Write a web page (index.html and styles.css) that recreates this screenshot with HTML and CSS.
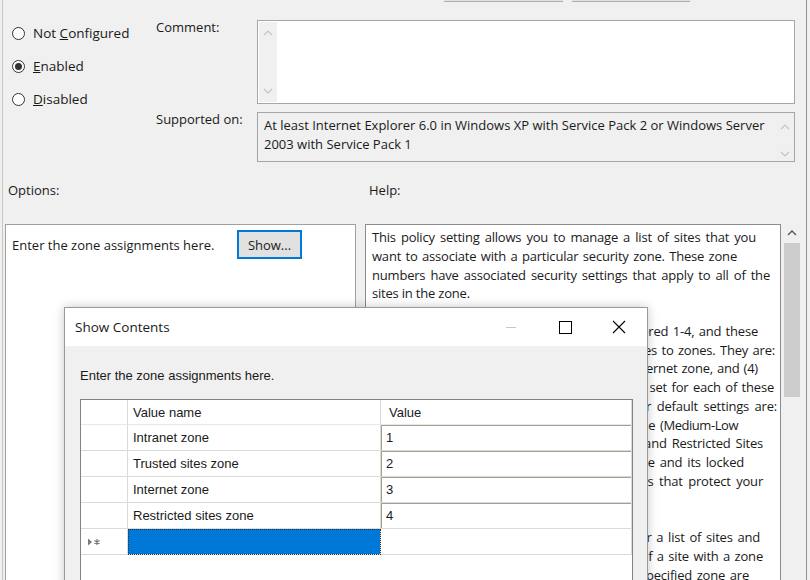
FILE: index.html
```html
<!DOCTYPE html>
<html>
<head>
<meta charset="utf-8">
<link rel="stylesheet" href="styles.css">
</head>
<body>
<div class="window">
  <div class="topbtns"><div class="tbtn w1"></div><div class="tbtn w2"></div></div>

  <div class="config">
    <div class="radios">
      <div class="radio"><span class="circle"></span><span>Not <u>C</u>onfigured</span></div>
      <div class="radio"><span class="circle on"></span><span><u>E</u>nabled</span></div>
      <div class="radio"><span class="circle"></span><span><u>D</u>isabled</span></div>
    </div>
    <div class="lbl lbl-comment">Comment:</div>
    <div class="box comment">
      <div class="vscroll">
        <svg width="10" height="6" viewBox="0 0 10 6"><polyline points="1,5 5,1 9,5" fill="none" stroke="#c4c4c4" stroke-width="1.2"/></svg>
        <svg width="10" height="6" viewBox="0 0 10 6"><polyline points="1,1 5,5 9,1" fill="none" stroke="#c4c4c4" stroke-width="1.2"/></svg>
      </div>
    </div>
    <div class="lbl lbl-supported">Supported on:</div>
    <div class="box supported">
      <div class="sup-text">At least Internet Explorer 6.0 in Windows XP with Service Pack 2 or Windows Server<br>2003 with Service Pack 1</div>
      <div class="vscroll plain">
        <svg width="10" height="6" viewBox="0 0 10 6"><polyline points="1,5 5,1 9,5" fill="none" stroke="#c4c4c4" stroke-width="1.2"/></svg>
        <svg width="10" height="6" viewBox="0 0 10 6"><polyline points="1,1 5,5 9,1" fill="none" stroke="#c4c4c4" stroke-width="1.2"/></svg>
      </div>
    </div>
  </div>

  <div class="sections">
    <div class="sec-opt">Options:</div>
    <div class="sec-help">Help:</div>
  </div>

  <div class="panels">
    <div class="options">
      <div class="opt-row">
        <span class="opt-label">Enter the zone assignments here.</span>
        <span class="show-btn">Show...</span>
      </div>
    </div>
    <div class="help">
      <span class="ln l1">This policy setting allows you to manage a list of sites that you</span>
      <span class="ln l2">want to associate with a particular security zone. These zone</span>
      <span class="ln l3">numbers have associated security settings that apply to all of the</span>
      <span class="ln end">sites in the zone.</span>
      <span class="ln blank"></span>
      <span class="ln l6">Internet Explorer has 4 security zones, numbered 1-4, and these</span>
      <span class="ln l7">are used by this policy setting to associate sites to zones. They are:</span>
      <span class="ln l8">(1) Intranet zone, (2) Trusted Sites zone, (3) Internet zone, and (4)</span>
      <span class="ln l9">Restricted Sites zone. Security settings can be set for each of these</span>
      <span class="ln l10">zones through other policy settings, and their default settings are:</span>
      <span class="ln l11">Trusted Sites zone (Low template), Intranet zone (Medium-Low</span>
      <span class="ln l12">template), Internet zone (Medium template), and Restricted Sites</span>
      <span class="ln l13">zone (High template). (The Local Machine zone and its locked</span>
      <span class="ln l14">down equivalent have special security settings that protect your</span>
      <span class="ln end">local computer.)</span>
      <span class="ln blank"></span>
      <span class="ln l17">If you enable this policy setting, you can enter a list of sites and</span>
      <span class="ln l18">their related zone numbers. The association of a site with a zone</span>
      <span class="ln l19">will ensure that the security settings for the specified zone are</span>
      <span class="ln end">applied to the site.</span>
    </div>
    <div class="help-scroll">
      <div class="arrow"><svg width="10" height="6" viewBox="0 0 10 6"><polyline points="1,5 5,1 9,5" fill="none" stroke="#555" stroke-width="1.3"/></svg></div>
      <div class="thumb"></div>
    </div>
  </div>

  <div class="dialog">
    <div class="titlebar">
      <span class="title">Show Contents</span>
      <div class="controls">
        <span class="ctl"><svg width="12" height="12" viewBox="0 0 12 12"><line x1="1" y1="6.5" x2="11" y2="6.5" stroke="#c6c6c6" stroke-width="1"/></svg></span>
        <span class="ctl"><svg width="13" height="13" viewBox="0 0 13 13"><rect x="0.5" y="0.5" width="12" height="12" fill="none" stroke="#000" stroke-width="1"/></svg></span>
        <span class="ctl"><svg width="14" height="14" viewBox="0 0 14 14"><path d="M1 1 L13 13 M13 1 L1 13" stroke="#000" stroke-width="1.1" fill="none"/></svg></span>
      </div>
    </div>
    <div class="dbody">
      <div class="dlabel">Enter the zone assignments here.</div>
      <div class="grid">
        <div class="c rh hdr"></div>
        <div class="c hdr">Value name</div>
        <div class="c hdr hv">Value</div>

        <div class="c rh"></div>
        <div class="c">Intranet zone</div>
        <div class="c val">1</div>

        <div class="c rh"></div>
        <div class="c">Trusted sites zone</div>
        <div class="c val">2</div>

        <div class="c rh"></div>
        <div class="c">Internet zone</div>
        <div class="c val">3</div>

        <div class="c rh"></div>
        <div class="c">Restricted sites zone</div>
        <div class="c val">4</div>

        <div class="c rh newrow"><svg width="14" height="8" viewBox="0 0 14 8"><polygon points="0,0.5 4,4 0,7.5" fill="#7a7a7a"/><path d="M9 1 V7 M6.4 2.5 L11.6 5.5 M11.6 2.5 L6.4 5.5" stroke="#7a7a7a" stroke-width="1.2"/></svg></div>
        <div class="c sel"></div>
        <div class="c val blank"></div>
      </div>
    </div>
  </div>
</div>
</body>
</html>
```

FILE: styles.css
```css
html, body {
  margin: 0;
  padding: 0;
}
body {
  background: #f0f0f0;
  font-family: "Open Sans", "Noto Sans", sans-serif;
  font-size: 13px;
  color: #1a1a1a;
  overflow: hidden;
  width: 810px;
  height: 580px;
}
.window {
  position: relative;
  margin-left: 2px;
  width: 803px;
  height: 580px;
  border-left: 1px solid #c6c6c6;
  border-right: 1px solid #8f8f8f;
  overflow: hidden;
}
.topbtns {
  display: flex;
  gap: 9px;
  margin-left: 441px;
  height: 2px;
}
.tbtn {
  height: 1px;
  background: #e1e1e1;
  border-bottom: 1px solid #adadad;
}
.w1 { width: 119px; }
.w2 { width: 118px; }

.config {
  display: grid;
  grid-template-columns: 144px 101px 538px;
  grid-template-rows: 84px 50px;
  row-gap: 8px;
  margin-top: 18px;
  margin-left: 9px;
}
.radios {
  grid-row: 1 / span 2;
  grid-column: 1;
  display: flex;
  flex-direction: column;
  gap: 15px;
  padding-top: 4px;
  font-size: 13.5px;
}
.radio {
  display: flex;
  align-items: center;
  gap: 8px;
  height: 18px;
  line-height: 18px;
}
.circle {
  width: 13px;
  height: 13px;
  box-sizing: border-box;
  border: 1px solid #333;
  border-radius: 50%;
  background: #fff;
  display: flex;
  align-items: center;
  justify-content: center;
}
.circle.on::after {
  content: "";
  width: 7px;
  height: 7px;
  border-radius: 50%;
  background: #333;
}
.lbl {
  line-height: 18px;
  margin-top: -2px;
  grid-column: 2;
}
.lbl-comment { grid-row: 1; }
.lbl-supported { grid-row: 2; }
.box {
  grid-column: 3;
  box-sizing: border-box;
  border: 1px solid #a6a6a6;
  display: flex;
  justify-content: space-between;
}
.comment {
  grid-row: 1;
  background: #fff;
  padding: 1px;
}
.supported {
  grid-row: 2;
  background: #f0f0f0;
}
.sup-text {
  padding: 3px 0 0 6px;
  line-height: 18.5px;
  white-space: nowrap;
}
.vscroll {
  width: 18px;
  background: #f0f0f0;
  display: flex;
  flex-direction: column;
  justify-content: space-between;
  align-items: center;
  padding: 8px 0 8px;
}
.vscroll.plain {
  padding: 11px 0 4px;
}

.sections {
  display: flex;
  margin-top: 19px;
  line-height: 18px;
}
.sec-opt {
  width: 366px;
  padding-left: 5px;
  box-sizing: border-box;
}
.panels {
  display: flex;
  margin-top: 25px;
  margin-left: 2px;
  align-items: flex-start;
}
.options {
  width: 351px;
  height: 380px;
  box-sizing: border-box;
  border: 1px solid #a0a0a0;
  background: #fff;
}
.opt-row {
  display: flex;
  align-items: center;
  padding: 5px 0 0 6px;
}
.opt-label {
  width: 225px;
}
.show-btn {
  width: 65px;
  height: 29px;
  box-sizing: border-box;
  border: 2px solid #0078d7;
  background: #e1e1e1;
  display: flex;
  align-items: center;
  justify-content: center;
}
.help {
  margin-left: 9px;
  width: 416px;
  height: 380px;
  box-sizing: border-box;
  border: 1px solid #8c8c8c;
  background: #fff;
  padding: 3px 0 0 6px;
  line-height: 18.75px;
  letter-spacing: -0.2px;
  overflow: hidden;
}
.help .ln {
  display: block;
  height: 18.75px;
  text-align: justify;
  text-align-last: justify;
  white-space: normal;
}
.help .ln.end,
.help .ln.blank {
  text-align: left;
  text-align-last: left;
}
.l1 { width: 384px; }
.l2 { width: 365px; }
.l3 { width: 398px; }
.l6 { width: 386px; }
.l7 { width: 403px; }
.l8 { width: 386px; }
.l9 { width: 402px; }
.l10 { width: 405px; }
.l11 { width: 366px; letter-spacing: -0.45px; }
.l12 { width: 391px; }
.l13 { width: 372px; }
.l14 { width: 391px; }
.l17 { width: 388px; }
.l18 { width: 391px; }
.l19 { width: 377px; }

.help-scroll {
  margin-left: 2px;
  width: 18px;
  height: 380px;
  background: #f0f0f0;
}
.help-scroll .arrow {
  height: 18px;
  display: flex;
  align-items: center;
  justify-content: center;
}
.thumb {
  margin: 1px 1px 0;
  height: 154px;
  background: #cdcdcd;
}

/* dialog */
.dialog {
  position: absolute;
  left: 61px;
  top: 307px;
  width: 584px;
  height: 300px;
  box-sizing: border-box;
  border: 1px solid #9a9a9a;
  background: #f0f0f0;
  box-shadow: 0 0 10px rgba(0, 0, 0, 0.22);
}
.titlebar {
  height: 38px;
  background: #fff;
  display: flex;
  align-items: center;
  justify-content: space-between;
}
.title {
  padding-left: 10px;
  font-size: 13.5px;
}
.controls {
  display: flex;
  height: 38px;
  padding-right: 1px;
}
.ctl {
  width: 54px;
  display: flex;
  align-items: center;
  justify-content: center;
}
.dbody {
  padding: 22px 0 0 15px;
  font-family: "Liberation Sans", Arial, sans-serif;
  font-size: 13px;
}
.dlabel {
  line-height: 16px;
}
.grid {
  margin-top: 15px;
  width: 553px;
  height: 200px;
  box-sizing: border-box;
  border: 1px solid #828282;
  background: #fff;
  display: grid;
  grid-template-columns: 47px 253px 251px;
  grid-template-rows: 25px repeat(5, 26px);
  align-content: start;
}
.c {
  box-sizing: border-box;
  border-right: 1px solid #dadada;
  border-bottom: 1px solid #dadada;
  padding-left: 5px;
  display: flex;
  align-items: center;
  white-space: nowrap;
}
.c.hdr {
  border-bottom: 1px solid #e8e8e8;
}
.c.hv {
  padding-left: 8px;
}
.c.val {
  box-shadow: inset 1px 1px 0 #a89e90;
  padding-left: 5px;
}
.c.val.blank {
  box-shadow: none;
}
.c.rh {
  padding-left: 0;
}
.c.newrow {
  padding-left: 7px;
}
.c.sel {
  background: #0078d7;
  outline: 1px dotted #333;
  outline-offset: -1px;
}
```
